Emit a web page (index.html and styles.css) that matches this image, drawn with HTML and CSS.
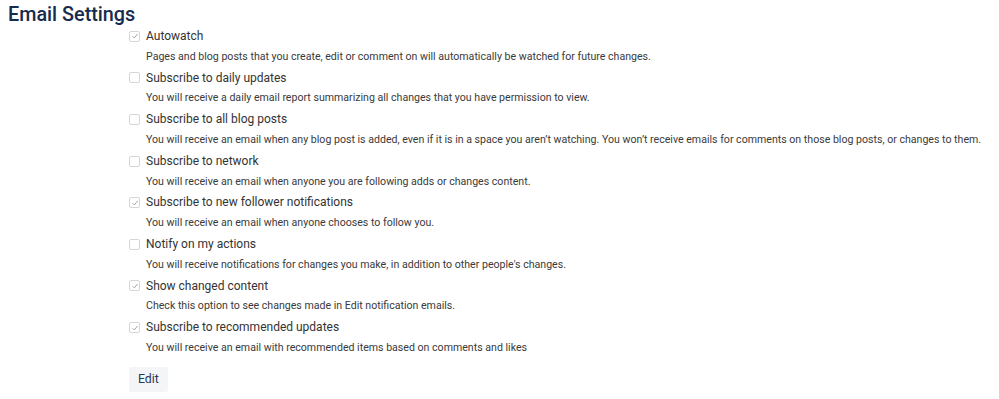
FILE: index.html
```html
<!DOCTYPE html>
<html>
<head>
<meta charset="utf-8">
<link rel="stylesheet" href="styles.css">
</head>
<body>
<h2 class="title">Email Settings</h2>
<div class="settings">
  <div class="item">
    <div class="label-row"><span class="box checked"><svg viewBox="0 0 10 10"><path d="M2.6 5.2 L4.3 6.9 L7.6 3"/></svg></span><span class="label">Autowatch</span></div>
    <div class="desc">Pages and blog posts that you create, edit or comment on will automatically be watched for future changes.</div>
  </div>
  <div class="item">
    <div class="label-row"><span class="box"></span><span class="label">Subscribe to daily updates</span></div>
    <div class="desc">You will receive a daily email report summarizing all changes that you have permission to view.</div>
  </div>
  <div class="item">
    <div class="label-row"><span class="box"></span><span class="label">Subscribe to all blog posts</span></div>
    <div class="desc">You will receive an email when any blog post is added, even if it is in a space you aren’t watching. You won’t receive emails for comments on those blog posts, or changes to them.</div>
  </div>
  <div class="item">
    <div class="label-row"><span class="box"></span><span class="label">Subscribe to network</span></div>
    <div class="desc">You will receive an email when anyone you are following adds or changes content.</div>
  </div>
  <div class="item">
    <div class="label-row"><span class="box checked"><svg viewBox="0 0 10 10"><path d="M2.6 5.2 L4.3 6.9 L7.6 3"/></svg></span><span class="label">Subscribe to new follower notifications</span></div>
    <div class="desc">You will receive an email when anyone chooses to follow you.</div>
  </div>
  <div class="item">
    <div class="label-row"><span class="box"></span><span class="label">Notify on my actions</span></div>
    <div class="desc">You will receive notifications for changes you make, in addition to other people's changes.</div>
  </div>
  <div class="item">
    <div class="label-row"><span class="box checked"><svg viewBox="0 0 10 10"><path d="M2.6 5.2 L4.3 6.9 L7.6 3"/></svg></span><span class="label">Show changed content</span></div>
    <div class="desc">Check this option to see changes made in Edit notification emails.</div>
  </div>
  <div class="item">
    <div class="label-row"><span class="box checked"><svg viewBox="0 0 10 10"><path d="M2.6 5.2 L4.3 6.9 L7.6 3"/></svg></span><span class="label">Subscribe to recommended updates</span></div>
    <div class="desc">You will receive an email with recommended items based on comments and likes</div>
  </div>
  <div class="actions"><button class="edit">Edit</button></div>
</div>
</body>
</html>
```

FILE: styles.css
```css
html, body {
  margin: 0;
  padding: 0;
  background: #ffffff;
}
body {
  font-family: "Roboto", "Liberation Sans", sans-serif;
  color: #333333;
}
.title {
  margin: 0;
  padding: 3px 0 0 8px;
  height: 23px;
  font-size: 19.8px;
  font-weight: 500;
  line-height: 24px;
  color: #172b4d;
}
.settings {
  margin-left: 129px;
  display: flex;
  flex-direction: column;
}
.item {
  display: flex;
  flex-direction: column;
}
.label-row {
  display: flex;
  align-items: center;
  height: 20.8px;
}
.box {
  width: 9px;
  height: 9px;
  border: 1px solid #d6d6d6;
  border-radius: 2px;
  background: #fff;
  margin-right: 6px;
  display: flex;
  align-items: center;
  justify-content: center;
}
.box svg {
  width: 10px;
  height: 10px;
  flex: none;
}
.box svg path {
  fill: none;
  stroke: #999999;
  stroke-width: 0.9;
}
.label {
  font-size: 12px;
  color: #333333;
  line-height: 20.8px;
}
.desc {
  margin-left: 17px;
  font-size: 10.6px;
  line-height: 20.8px;
  height: 20.8px;
  color: #3a3a3a;
  white-space: nowrap;
}
.actions {
  margin-top: 8px;
}
.edit {
  font-family: inherit;
  font-size: 12.3px;
  color: #253858;
  background: #f4f5f7;
  border: none;
  border-radius: 3px;
  height: 25px;
  padding: 0 9px;
}
```
